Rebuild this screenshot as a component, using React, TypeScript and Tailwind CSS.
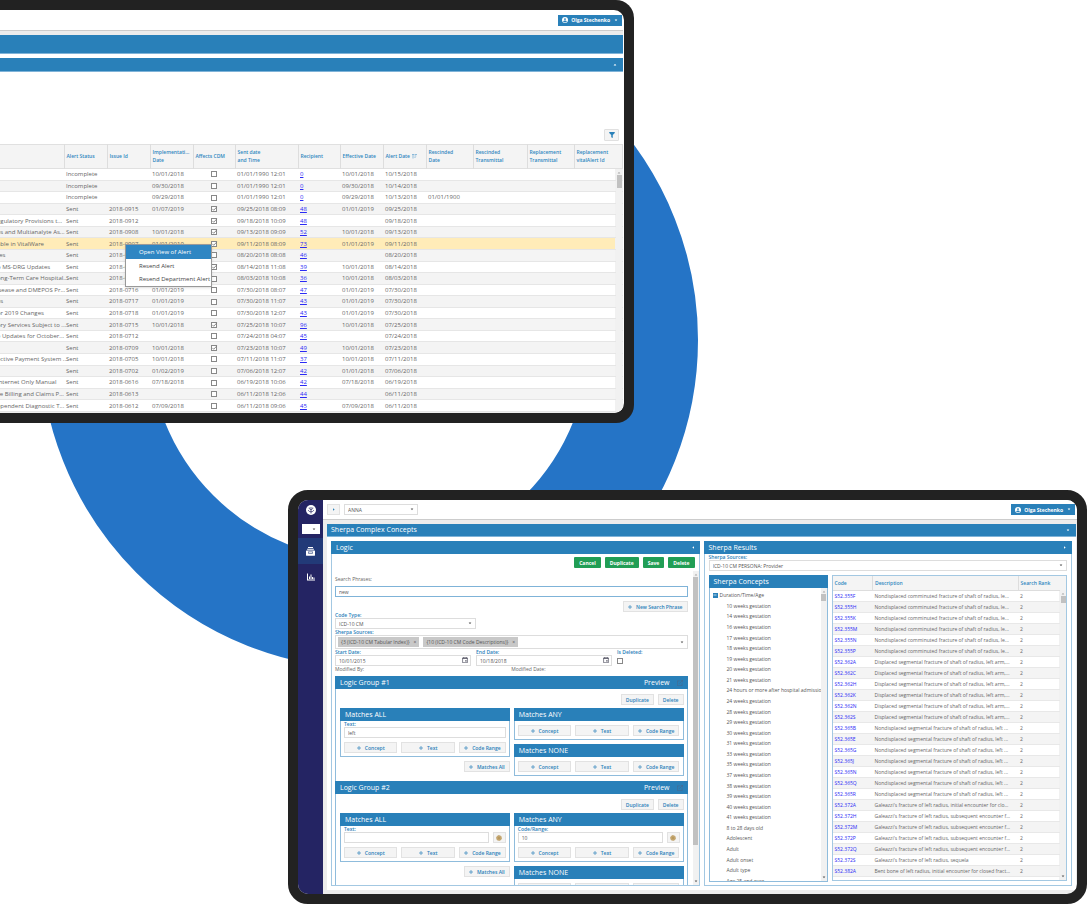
import type { ReactNode } from "react";
import { Minus } from "lucide-react";

interface AlertRow {
  title: string;
  status: string;
  issue: string;
  implementation: string;
  affects: boolean;
  sent: string;
  recipient: string;
  effective: string;
  alert: string;
  rescinded?: string;
}

const alertLines = [
  "|Incomplete||10/01/2018||01/01/1990 12:01|0|10/01/2018|10/15/2018",
  "|Incomplete||09/30/2018||01/01/1990 12:01|0|09/30/2018|10/14/2018",
  "|Incomplete||09/29/2018||01/01/1990 12:01|0|09/29/2018|10/13/2018|01/01/1900",
  "|Sent|2018-0915|01/07/2019|x|09/25/2018 08:09|48|01/01/2019|09/25/2018",
  "egulatory Provisions t...|Sent|2018-0912||x|09/18/2018 10:09|48||09/18/2018",
  "es and Multianalyte As...|Sent|2018-0908|10/01/2018|x|09/13/2018 09:09|52|10/01/2018|09/13/2018",
  "able in VitalWare|Sent|2018-0907|01/01/2019|x|09/11/2018 08:09|73|01/01/2019|09/11/2018",
  "tes|Sent|2018-0820|||08/20/2018 08:08|46||08/20/2018",
  "o MS-DRG Updates|Sent|2018-0814|10/01/2018|x|08/14/2018 11:08|39|10/01/2018|08/14/2018",
  "ong-Term Care Hospital...|Sent|2018-0803|10/01/2018||08/03/2018 10:08|36|10/01/2018|08/03/2018",
  "isease and DMEPOS Pr...|Sent|2018-0716|01/01/2019||07/30/2018 08:07|47|01/01/2019|07/30/2018",
  "es|Sent|2018-0717|01/01/2019||07/30/2018 11:07|43|01/01/2019|07/30/2018",
  "or 2019 Changes|Sent|2018-0718|01/01/2019||07/30/2018 12:07|43|01/01/2019|07/30/2018",
  "ory Services Subject to ...|Sent|2018-0715|10/01/2018|x|07/25/2018 10:07|96|10/01/2018|07/25/2018",
  "e Updates for October...|Sent|2018-0712|||07/24/2018 04:07|45||07/24/2018",
  "|Sent|2018-0709|10/01/2018|x|07/23/2018 10:07|49|10/01/2018|07/23/2018",
  "ective Payment System ...|Sent|2018-0705|10/01/2018||07/11/2018 11:07|37|10/01/2018|07/11/2018",
  "|Sent|2018-0702|01/02/2019||07/06/2018 12:07|42|01/01/2018|07/06/2018",
  "Internet Only Manual|Sent|2018-0616|07/18/2018||06/19/2018 10:06|42|07/18/2018|06/19/2018",
  "ce Billing and Claims P...|Sent|2018-0613|||06/11/2018 12:06|44||06/11/2018",
  "ependent Diagnostic T...|Sent|2018-0612|07/09/2018||06/11/2018 09:06|45|07/09/2018|06/11/2018",
];

const alerts: AlertRow[] = alertLines.map((line) => {
  const [title, status, issue, implementation, affects, sent, recipient, effective, alert, rescinded] =
    line.split("|");
  return {
    title,
    status,
    issue,
    implementation,
    affects: affects === "x",
    sent,
    recipient,
    effective,
    alert,
    rescinded,
  };
});

const concepts = [
  "10 weeks gestation",
  "14 weeks gestation",
  "16 weeks gestation",
  "17 weeks gestation",
  "18 weeks gestation",
  "19 weeks gestation",
  "20 weeks gestation",
  "21 weeks gestation",
  "24 hours or more after hospital admission",
  "24 weeks gestation",
  "28 weeks gestation",
  "29 weeks gestation",
  "30 weeks gestation",
  "31 weeks gestation",
  "33 weeks gestation",
  "35 weeks gestation",
  "37 weeks gestation",
  "38 weeks gestation",
  "39 weeks gestation",
  "40 weeks gestation",
  "41 weeks gestation",
  "8 to 28 days old",
  "Adolescent",
  "Adult",
  "Adult onset",
  "Adult type",
  "Age 25 and over",
];

const comminuted = "Nondisplaced comminuted fracture of shaft of radius, le...";
const displaced = "Displaced segmental fracture of shaft of radius, left arm,...";
const segmental = "Nondisplaced segmental fracture of shaft of radius, left ...";
const galeazzi = "Galeazzi's fracture of left radius, subsequent encounter f...";

const codes: [string, string][] = [
  ["S52.355F", comminuted],
  ["S52.355H", comminuted],
  ["S52.355K", comminuted],
  ["S52.355M", comminuted],
  ["S52.355N", comminuted],
  ["S52.355P", comminuted],
  ["S52.362A", displaced],
  ["S52.362C", displaced],
  ["S52.362H", displaced],
  ["S52.362K", displaced],
  ["S52.362N", displaced],
  ["S52.362S", displaced],
  ["S52.365B", segmental],
  ["S52.365E", segmental],
  ["S52.365G", segmental],
  ["S52.365J", segmental],
  ["S52.365N", segmental],
  ["S52.365Q", segmental],
  ["S52.365R", segmental],
  ["S52.372A", "Galeazzi's fracture of left radius, initial encounter for clo..."],
  ["S52.372H", galeazzi],
  ["S52.372M", galeazzi],
  ["S52.372P", galeazzi],
  ["S52.372Q", galeazzi],
  ["S52.372S", "Galeazzi's fracture of left radius, sequela"],
  ["S52.382A", "Bent bone of left radius, initial encounter for closed fract..."],
  ["S52.382C", "Bent bone of left radius, initial encounter for open fractu..."],
];

function Caret({ className = "" }: { className?: string }) {
  return (
    <svg viewBox="0 0 6 4" className={`w-[4px] h-[3px] shrink-0 fill-current ${className}`}>
      <path d="M1 0.5h4L3 3z" />
    </svg>
  );
}

function UserButton() {
  return (
    <button
      type="button"
      className="flex h-[11px] items-center bg-[#2980b9] px-1 text-[5px] leading-[8px] font-bold text-white"
    >
      <svg viewBox="0 0 12 12" className="mr-[3px] size-[6px]">
        <circle cx="6" cy="6" r="6" fill="#fff" />
        <circle cx="6" cy="4.2" r="1.9" fill="#2980b9" />
        <path d="M2.3 8.8C3 7.3 4.8 6.9 6 6.9s3 .4 3.7 1.9A4.5 4.5 0 0 1 6 10.600a4.500 4.500 0 0 1-3.700-1.800z" fill="#2980b9" />
      </svg>
      Olga Stechenko
      <Caret className="ml-1" />
    </button>
  );
}

function Tick({ label, checked }: { label: string; checked?: boolean }) {
  return (
    <span className="relative inline-flex size-[6px] align-middle">
      <input
        type="checkbox"
        aria-label={label}
        defaultChecked={checked}
        className="peer size-full appearance-none border border-[#888] bg-white"
      />
      <svg
        viewBox="0 0 8 8"
        className="pointer-events-none absolute inset-0 hidden size-full overflow-visible peer-checked:block"
        fill="none"
        stroke="#777"
        strokeWidth="1.1"
      >
        <path d="M1.8 3.800l1.800 1.900L7.800 1.200" />
      </svg>
    </span>
  );
}

function Scrollbar({ thumb, down = true }: { thumb: string; down?: boolean }) {
  return (
    <div aria-hidden="true" className="flex w-[6px] shrink-0 flex-col items-center bg-[#f1f1f1] py-px text-[#555]">
      <Caret className="my-px rotate-180 text-[#aaa]" />
      <div className={`w-[5px] bg-[#c1c1c1] ${thumb}`} />
      {down && <Caret className="mt-auto mb-px" />}
    </div>
  );
}

const headCell =
  "border-r border-[#ddd] px-[2px] pb-[2px] text-left align-middle text-[5px] leading-[8px] font-semibold text-[#2f87c0] whitespace-nowrap";

function AlertsTable() {
  return (
    <div className="relative">
      <table className="h-[268px] w-full table-fixed border-collapse text-[6px] leading-[8px] text-[#666]">
        <colgroup>
          <col className="w-[64px]" />
          <col className="w-[43px]" />
          <col className="w-[43px]" />
          <col className="w-[43px]" />
          <col className="w-[42px]" />
          <col className="w-[63px]" />
          <col className="w-[42px]" />
          <col className="w-[43px]" />
          <col className="w-[43px]" />
          <col className="w-[47px]" />
          <col className="w-[54px]" />
          <col className="w-[47px]" />
          <col />
          <col className="w-[8px]" />
        </colgroup>
        <thead>
          <tr className="h-[24px] border-y border-[#e0e0e0] bg-[#f4f4f4]">
            <th className={headCell} aria-label="Title" />
            <th className={headCell}>Alert Status</th>
            <th className={headCell}>Issue Id</th>
            <th className={headCell}>
              Implementati...
              <br />
              Date
            </th>
            <th className={`${headCell} text-center`}>Affects CDM</th>
            <th className={headCell}>
              Sent date
              <br />
              and Time
            </th>
            <th className={headCell}>Recipient</th>
            <th className={headCell}>Effective Date</th>
            <th className={headCell}>
              Alert Date
              <svg viewBox="0 0 10 10" className="ml-[2px] inline size-[5px]" fill="none" stroke="#2f87c0">
                <path d="M2 9V0M0.5 1.5L2 0l1.500 1.500M5 1h5M5 4h3.500M5 7h2" />
              </svg>
            </th>
            <th className={headCell}>
              Rescinded
              <br />
              Date
            </th>
            <th className={headCell}>
              Rescinded
              <br />
              Transmittal
            </th>
            <th className={headCell}>
              Replacement
              <br />
              Transmittal
            </th>
            <th className={headCell} colSpan={2}>
              Replacement
              <br />
              vitalAlert Id
            </th>
          </tr>
        </thead>
        <tbody>
          {alerts.map((row, i) => (
            <tr
              key={i}
              className={`border-b border-[#e6e6e6] whitespace-nowrap [&>td]:px-[2px] ${
                i === 6 ? "bg-[#ffecb8]" : i % 2 ? "bg-[#f4f4f4]" : "bg-white"
              }`}
            >
              <td>
                <div className="-ml-[5px]">{row.title}</div>
              </td>
              <td>{row.status}</td>
              <td>{row.issue}</td>
              <td>{row.implementation}</td>
              <td className="text-center leading-[6px]">
                <Tick label={`Affects CDM ${row.issue}`} checked={row.affects} />
              </td>
              <td>{row.sent}</td>
              <td>
                <a href="#recipients" className="text-[#2a2af5] underline">
                  {row.recipient}
                </a>
              </td>
              <td>{row.effective}</td>
              <td>{row.alert}</td>
              <td>{row.rescinded}</td>
              <td />
              <td />
              <td />
              <td className="bg-[#f1f1f1]" />
            </tr>
          ))}
        </tbody>
      </table>
      <div className="absolute top-[25px] right-px bottom-0 flex">
        <Scrollbar thumb="h-[13px]" down={false} />
      </div>
      <div
        role="menu"
        className="absolute top-[100px] left-[125px] flex w-[87px] flex-col border border-[#999] bg-white text-[6px] leading-[8px] text-[#444] shadow-sm"
      >
        <button type="button" role="menuitem" className="h-[14px] bg-[#2f86c3] pl-[13px] text-left text-white">
          Open View of Alert
        </button>
        <button type="button" role="menuitem" className="h-[13px] pl-[13px] text-left">
          Resend Alert
        </button>
        <button type="button" role="menuitem" className="h-[14px] pl-[13px] text-left whitespace-nowrap">
          Resend Department Alert
        </button>
      </div>
    </div>
  );
}

function AlertsScreen() {
  return (
    <section className="relative mr-[454px] rounded-r-[18px] border-y-[10px] border-r-[10px] border-[#222] bg-[#222]">
      <div className="overflow-hidden rounded-r-[10px] bg-white pr-px">
        <header className="flex h-[20px] items-center justify-end pr-px">
          <UserButton />
        </header>
        <div className="h-[5px] border-t border-[#ccc] bg-[#ececec]" />
        <div className="h-[19px] border-b border-[#7fb3d8] bg-[#2980b9]" />
        <div className="mt-[4px] flex h-[14px] items-center justify-end border-b border-[#7fb3d8] bg-[#2980b9] pr-[6px] text-white">
          <Caret className="rotate-180" />
        </div>
        <div className="flex h-[72px] items-end justify-end pr-1 pb-[3px]">
          <button
            type="button"
            aria-label="Filter"
            className="flex h-[12px] w-[15px] items-center justify-center rounded-[1px] border border-[#e0e0e0] bg-[#f4f4f4]"
          >
            <svg viewBox="0 0 12 12" className="size-[6px]" fill="#2980b9">
              <path d="M0.5 0h11v2L7.500 6v6l-3-1.500V6l-4-4z" />
            </svg>
          </button>
        </div>
        <AlertsTable />
        <div className="h-px bg-[#eee]" />
      </div>
    </section>
  );
}

function PanelHeader({ children, right }: { children: ReactNode; right?: ReactNode }) {
  return (
    <header className="-mx-px -mt-px flex h-[13px] items-center justify-between bg-[#2980b9] px-[5px] text-[7px] leading-[10px] text-white">
      <h2>{children}</h2>
      {right}
    </header>
  );
}

function AddButton({ children }: { children: ReactNode }) {
  return (
    <button
      type="button"
      className="flex h-[11px] items-center justify-center gap-1 border border-[#e2e2e2] bg-[#f4f4f4] px-1 text-[5px] leading-[8px] font-semibold whitespace-nowrap text-[#2980b9]"
    >
      <svg viewBox="0 0 8 8" className="size-[4px] shrink-0" stroke="currentColor" strokeWidth="1.300">
        <path d="M4 0v8M0 4h8" />
      </svg>
      {children}
    </button>
  );
}

function PlainButton({ children }: { children: ReactNode }) {
  return (
    <button
      type="button"
      className="h-[11px] border border-[#e2e2e2] bg-[#f4f4f4] px-[4px] text-[5px] leading-[8px] font-semibold text-[#2980b9]"
    >
      {children}
    </button>
  );
}

function GreenButton({ children }: { children: ReactNode }) {
  return (
    <button type="button" className="h-[11px] rounded-[1px] bg-[#219e55] px-[5px] text-[5px] leading-[8px] font-bold text-white">
      {children}
    </button>
  );
}

const label = "block text-[5px] leading-[6px] font-semibold whitespace-nowrap text-[#2980b9]";
const box =
  "block h-[11px] w-full appearance-none border border-[#ddd] bg-white px-[3px] text-[5px] leading-[8px] text-[#555]";

function SelectBox({ id, value }: { id: string; value: string }) {
  return (
    <div className="relative">
      <select id={id} aria-label={value} className={box}>
        <option>{value}</option>
      </select>
      <Caret className="pointer-events-none absolute top-[4px] right-[4px] text-[#555]" />
    </div>
  );
}

function DateBox({ id, title, value }: { id: string; title: string; value: string }) {
  return (
    <div className="w-[136px]">
      <label htmlFor={id} className={label}>
        {title}
      </label>
      <div className="relative">
        <input id={id} type="text" defaultValue={value} className={box} />
        <svg viewBox="0 0 10 10" className="absolute top-[2px] right-[3px] size-[6px]" fill="none" stroke="#334">
          <path d="M1 1.500h8v8H1zM1 2.500h8M3 0v2M7 0v2" />
          <path d="M5.500 5.500h2v2h-2z" fill="#334" stroke="none" />
        </svg>
      </div>
    </div>
  );
}

interface MatchProps {
  title: string;
  id: string;
  field?: string;
  value?: string;
  gear?: boolean;
}

function MatchPanel({ title, id, field, value, gear }: MatchProps) {
  return (
    <section className="border border-[#8fbcdc] bg-white pb-[3px]">
      <PanelHeader>{title}</PanelHeader>
      <div className="px-[3px]">
        {field && (
          <>
            <label htmlFor={id} className={label}>
              {field}
            </label>
            <div className="flex gap-1">
              <input id={id} type="text" defaultValue={value} className={`${box} min-w-0 flex-1`} />
              {gear && (
                <button
                  type="button"
                  aria-label="Settings"
                  className="flex h-[11px] w-[13px] shrink-0 items-center justify-center border border-[#e2e2e2] bg-[#f4f4f4]"
                >
                  <svg viewBox="0 0 12 12" className="size-[6px]">
                    <circle cx="6" cy="6" r="5" fill="#c3a56f" stroke="#c3a56f" strokeWidth="2" strokeDasharray="2 1" />
                    <circle cx="6" cy="6" r="1.500" fill="#a98848" />
                  </svg>
                </button>
              )}
            </div>
          </>
        )}
        <div className="mt-1 grid grid-cols-[8fr_8fr_7fr] gap-1">
          <AddButton>Concept</AddButton>
          <AddButton>Text</AddButton>
          <AddButton>Code Range</AddButton>
        </div>
      </div>
    </section>
  );
}

interface GroupProps {
  n: number;
  all: Omit<MatchProps, "title" | "id">;
  any: Omit<MatchProps, "title" | "id">;
}

function LogicGroup({ n, all, any }: GroupProps) {
  return (
    <section className="border-x border-[#8fbcdc] pb-[5px]">
      <header className="-mx-px flex h-[13px] items-center bg-[#2980b9] px-[5px] text-[7px] leading-[10px] text-white">
        <h2>Logic Group #{n}</h2>
        <span className="ml-auto">Preview</span>
        <svg viewBox="0 0 10 10" className="ml-[7px] size-[6px]" fill="none" stroke="#4d6486">
          <path d="M8.500 5.500v4h-8v-8h4M4 6l5-5M6 0.500h3.500V4" />
        </svg>
      </header>
      <div className="flex justify-end gap-1 px-[3px] pt-[5px] pb-[3px]">
        <PlainButton>Duplicate</PlainButton>
        <PlainButton>Delete</PlainButton>
      </div>
      <div className="grid grid-cols-2 items-start gap-1 pr-[3px] pl-1">
        <div className="flex flex-col gap-1">
          <MatchPanel title="Matches ALL" id={`all-${n}`} {...all} />
          <div className="flex justify-end">
            <AddButton>Matches All</AddButton>
          </div>
        </div>
        <div className="flex flex-col gap-1">
          <MatchPanel title="Matches ANY" id={`any-${n}`} {...any} />
          <MatchPanel title="Matches NONE" id={`none-${n}`} />
        </div>
      </div>
    </section>
  );
}

function Chip({ children }: { children: ReactNode }) {
  return (
    <span className="flex h-[10px] items-center gap-1 bg-[#c8c8c8] px-[3px] text-[5px] leading-[8px] text-[#555]">
      {children}
      <button type="button" aria-label="Remove">
        ×
      </button>
    </span>
  );
}

function LogicPanel() {
  return (
    <section className="min-w-0 border border-[#a3c8e2]">
      <PanelHeader right={<Caret className="rotate-90" />}>Logic</PanelHeader>
      <div className="flex justify-end gap-1 px-1 py-[3px]">
        <GreenButton>Cancel</GreenButton>
        <GreenButton>Duplicate</GreenButton>
        <GreenButton>Save</GreenButton>
        <GreenButton>Delete</GreenButton>
      </div>
      <div className="flex h-[314px] overflow-hidden">
        <form className="min-w-0 flex-1 pt-1 pr-[5px] pl-[3px]">
          <label htmlFor="phrase" className="mb-[3px] block text-[5px] leading-[8px] text-[#666]">
            Search Phrases:
          </label>
          <input
            id="phrase"
            type="text"
            defaultValue="new"
            className="block h-[11px] w-full border border-[#7fb3d8] px-[3px] text-[5px] leading-[8px] text-[#555]"
          />
          <div className="mt-1 flex justify-end">
            <AddButton>New Search Phrase</AddButton>
          </div>
          <label htmlFor="code-type" className={label}>
            Code Type:
          </label>
          <div className="w-[141px]">
            <SelectBox id="code-type" value="ICD-10 CM" />
          </div>
          <div className={label}>Sherpa Sources:</div>
          <div className="flex h-[14px] items-center gap-1 border border-[#ddd] px-[2px]">
            <Chip>{"{3 (ICD-10 CM Tabular Index)}"}</Chip>
            <Chip>{"{10 (ICD-10 CM Code Descriptions)}"}</Chip>
            <Caret className="mr-px ml-auto text-[#555]" />
          </div>
          <div className="flex gap-[5px]">
            <DateBox id="start" title="Start Date:" value="10/01/2015" />
            <DateBox id="end" title="End Date:" value="10/18/2018" />
            <div>
              <div className={label}>Is Deleted:</div>
              <div className="flex h-[11px] items-center">
                <Tick label="Is Deleted" />
              </div>
            </div>
          </div>
          <div className="mb-1 grid grid-cols-2 text-[5px] leading-[6px] text-[#666]">
            <span>Modified By:</span>
            <span>Modified Date:</span>
          </div>
          <LogicGroup n={1} all={{ field: "Text:", value: "left" }} any={{}} />
          <LogicGroup
            n={2}
            all={{ field: "Text:", value: "", gear: true }}
            any={{ field: "Code/Range:", value: "10", gear: true }}
          />
        </form>
        <Scrollbar thumb="h-[268px]" />
      </div>
    </section>
  );
}

function ConceptTree() {
  return (
    <section className="w-[119px] shrink-0 border border-[#8fbcdc]">
      <PanelHeader>Sherpa Concepts</PanelHeader>
      <div className="flex h-[293px] overflow-hidden">
        <ul className="mt-[2px] grid h-[296px] min-w-0 flex-1 auto-rows-fr items-center overflow-hidden pl-[3px] text-[5px] leading-[8px] whitespace-nowrap text-[#555]">
          <li className="flex items-center gap-[2px]">
            <span className="flex size-[5px] items-center justify-center bg-[#2980b9] text-white">
              <Minus size={4} strokeWidth={4} />
            </span>
            Duration/Time/Age
          </li>
          {concepts.map((name) => (
            <li key={name} className="overflow-hidden pl-[14px]">
              {name}
            </li>
          ))}
        </ul>
        <Scrollbar thumb="h-[7px]" />
      </div>
    </section>
  );
}

function CodeTable() {
  return (
    <div className="flex h-[306px] min-w-0 flex-1 flex-col overflow-hidden border border-[#a3c8e2]">
      <div className="relative">
        <table className="w-full table-fixed border-collapse text-[5px] leading-[8px] whitespace-nowrap text-[#666]">
          <colgroup>
            <col className="w-[40px]" />
            <col />
            <col className="w-[41px]" />
            <col className="w-[7px]" />
          </colgroup>
          <thead>
            <tr className="h-[14px] border-b border-[#ddd] bg-[#f4f4f4] text-left text-[#2f87c0]">
              <th className="border-r border-[#ddd] px-[2px] font-semibold">Code</th>
              <th className="border-r border-[#ddd] px-[2px] font-semibold">Description</th>
              <th className="px-[2px] font-semibold" colSpan={2}>
                Search Rank
              </th>
            </tr>
          </thead>
          <tbody>
            {codes.map(([code, text], i) => (
              <tr key={code} className={`h-[11px] border-b border-[#e8e8e8] ${i % 2 ? "bg-[#f4f4f4]" : "bg-white"}`}>
                <td className="px-[2px]">
                  <a href="#code" className="text-[#2a2af5]">
                    {code}
                  </a>
                </td>
                <td className="px-[2px]">{text}</td>
                <td className="px-[2px]">2</td>
                <td className="bg-[#f1f1f1]" />
              </tr>
            ))}
          </tbody>
        </table>
        <div className="absolute top-[14px] right-0 flex h-[290px]">
          <Scrollbar thumb="h-[7px]" />
        </div>
      </div>
    </div>
  );
}

function ResultsPanel() {
  return (
    <section className="min-w-0 border border-[#a3c8e2]">
      <PanelHeader right={<Caret className="-rotate-90" />}>Sherpa Results</PanelHeader>
      <div className="px-1">
        <label htmlFor="sources" className={label}>
          Sherpa Sources:
        </label>
        <SelectBox id="sources" value="ICD-10 CM PERSONA: Provider" />
        <div className="mt-1 flex gap-1">
          <ConceptTree />
          <CodeTable />
        </div>
      </div>
    </section>
  );
}

function Sidebar() {
  return (
    <nav className="flex w-[25px] shrink-0 flex-col items-center bg-[#242463] pt-[5px]">
      <svg viewBox="0 0 20 20" className="size-[10px]">
        <circle cx="10" cy="10" r="10" fill="#fff" />
        <path
          d="M10 4v13M10 9C7.500 9 6 7.500 6.500 5M10 9c2.500 0 4-1.500 3.500-4M10 13.500c-3 0-5-1-5.500-3.500M10 13.500c3 0 5-1 5.500-3.500"
          fill="none"
          stroke="#242463"
          strokeWidth="1.400"
        />
      </svg>
      <button
        type="button"
        aria-label="Switch module"
        className="mt-[9px] flex h-[10px] w-[18px] items-center justify-end bg-white pr-1 text-[#555]"
      >
        <Caret />
      </button>
      <a href="#concepts" aria-label="Concepts" className="mt-[4px] flex h-[26px] w-full items-center justify-center bg-[#223a78]">
        <svg viewBox="0 0 16 16" className="size-[9px]" fill="#fff">
          <path d="M3.500 0h9v1.800h-9zM2 3h12v2H2zM1 6h14a1 1 0 0 1 1 1v7a1.500 1.500 0 0 1-1.500 1.500h-13A1.500 1.500 0 0 1 0 14V7a1 1 0 0 1 1-1z" />
          <path d="M4 8.500h8M4.500 8.500v3h7v-3" fill="none" stroke="#223a78" strokeWidth="1" />
        </svg>
      </a>
      <a href="#reports" aria-label="Reports" className="mt-[9px]">
        <svg viewBox="0 0 16 16" className="size-[8px]" fill="#fff">
          <path d="M0 1h2v12h14v2H0zM4 7h2v5H4zM7 3h2v9H7zM10 8h2v4h-2zM13 9h2v3h-2z" />
        </svg>
      </a>
    </nav>
  );
}

function ConceptsScreen() {
  return (
    <section className="relative mt-[67px] mr-px ml-[288px] rounded-[20px] border-[10px] border-[#222] bg-[#222]">
      <div className="flex overflow-hidden rounded-[10px] bg-[#ececec]">
        <Sidebar />
        <div className="min-w-0 flex-1 pb-1">
          <header className="flex h-[19px] items-center bg-white pr-[2px] pl-1">
            <button
              type="button"
              aria-label="Expand"
              className="mr-1 flex h-[11px] w-[13px] items-center justify-center border border-[#e2e2e2] bg-[#f4f4f4] text-[#2980b9]"
            >
              <Caret className="-rotate-90" />
            </button>
            <div className="mr-auto w-[74px]">
              <SelectBox id="client" value="ANNA" />
            </div>
            <UserButton />
          </header>
          <div className="h-[5px] border-t border-[#ccc]" />
          <div className="mr-px ml-1 bg-white pb-1">
            <div className="flex h-[13px] items-center justify-between border-b border-[#7fb3d8] bg-[#2980b9] px-1 text-[7px] leading-[10px] text-white">
              <h1>Sherpa Complex Concepts</h1>
              <Caret className="mr-[2px]" />
            </div>
            <div className="mt-1 grid grid-cols-2 gap-1 px-1">
              <LogicPanel />
              <ResultsPanel />
            </div>
          </div>
        </div>
      </div>
    </section>
  );
}

export default function App() {
  return (
    <main className="relative overflow-hidden bg-white font-['Open_Sans',sans-serif]">
      <div className="absolute top-[11px] left-[40px] size-[658px] rounded-full border-[109px] border-[#2574c6]" />
      <AlertsScreen />
      <ConceptsScreen />
    </main>
  );
}
